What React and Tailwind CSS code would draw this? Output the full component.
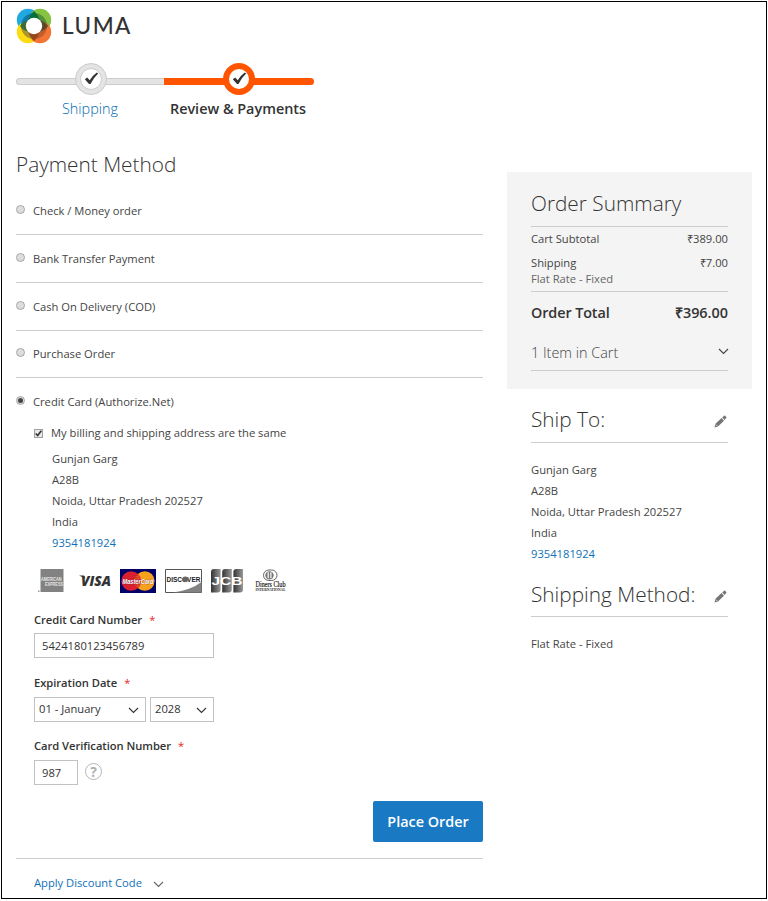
import React from "react";

const address = ["Gunjan Garg", "A28B", "Noida, Uttar Pradesh 202527", "India"];

function LumaMark() {
  return (
    <svg width="36" height="36" viewBox="0 0 36 36" className="block">
      <circle cx="12" cy="12" r="11.200" fill="#21a8e0" />
      <circle cx="24" cy="12" r="11.200" fill="#84c441" />
      <circle cx="12" cy="24" r="11.200" fill="#fcdb12" />
      <circle cx="24" cy="24" r="11.200" fill="#f37435" />
      <path d="M18 18V5A13 13 0 0 0 5 18z" fill="#0f7aa3" />
      <path d="M18 18V5A13 13 0 0 1 31 18z" fill="#548f3b" />
      <path d="M18 18V31A13 13 0 0 1 5 18z" fill="#a8962c" />
      <path d="M18 18V31A13 13 0 0 0 31 18z" fill="#c15c2b" />
      <path d="M18 3Q22 6.500 23.500 11.500L12.500 11.500Q14 6.500 18 3z" fill="#067038" />
      <path d="M18 33Q22 29.500 23.500 24.500L12.500 24.500Q14 29.500 18 33z" fill="#97461c" />
      <path d="M4 18Q6.500 14 11.500 12.500L11.500 23.500Q6.500 22 4 18z" fill="#3f6a33" />
      <path d="M32 18Q29.500 14 24.500 12.500L24.500 23.500Q29.500 22 32 18z" fill="#60472a" />
      <circle cx="18" cy="18" r="8.200" fill="#fff" />
    </svg>
  );
}

function Step({ label, active }) {
  return (
    <div className={`relative flex flex-col items-center ${active ? "w-[150px]" : "w-[148px]"}`}>
      <div
        className={`absolute top-[15px] left-0 h-[7px] w-full ${
          active
            ? "rounded-r-[4px] bg-[#ff5501]"
            : "rounded-l-[4px] border border-r-0 border-[#cccccc] bg-[#e4e4e4]"
        }`}
      />
      <div
        className={`relative flex h-8 w-8 items-center justify-center rounded-full ${
          active ? "bg-[#ff5501]" : "ml-[2px] border border-[#cccccc] bg-[#e4e4e4]"
        }`}
      >
        <div className={`flex items-center justify-center rounded-full bg-white ${active ? "h-5 w-5" : "h-[22px] w-[22px] border border-[#cccccc]"}`}>
          <svg width="15" height="13" viewBox="0 0 15 13" className="mt-[-1px] shrink-0">
            <path d="M.8 7.200L3.200 5.600L5.700 8.300Q8.600 3.600 12.800.600L14.200 1.600Q9.600 5.800 6.500 11.900L5 12z" fill="#333" />
          </svg>
        </div>
      </div>
      <div
        className={`mt-[4px] text-[14.4px] leading-5 whitespace-nowrap ${
          active ? "ml-[-2px] font-semibold text-[#333]" : "font-light text-[#006bb4]"
        }`}
      >
        {label}
      </div>
    </div>
  );
}

function Radio({ checked }) {
  return (
    <span className="mt-[-3px] flex h-[9px] w-[9px] shrink-0 items-center justify-center rounded-full border border-[#a3a3a3] bg-gradient-to-b from-[#e2e2e2] to-[#dadada]">
      {checked && <span className="h-[5px] w-[5px] rounded-full bg-[#444]" />}
    </span>
  );
}

function Method({ label, checked, className, textClass = "pt-[2px]" }) {
  return (
    <div className={`flex items-center gap-2 ${className}`}>
      <Radio checked={checked} />
      <span className={textClass}>{label}</span>
    </div>
  );
}

function Chevron({ className = "" }) {
  return (
    <svg width="11" height="7" viewBox="0 0 11 7" className={`shrink-0 ${className}`}>
      <path d="M1 1l4.500 4.500L10 1" fill="none" stroke="currentColor" strokeWidth="1.100" />
    </svg>
  );
}

function Pencil() {
  return (
    <svg width="13" height="13" viewBox="0 0 13 13" className="mt-[3px] mr-[1px] shrink-0">
      <path d="M.5 12.500L1.500 8.800L7.500 3.100L10 5.700L4 11.400z" fill="#757575" />
      <path d="M8.200 2.500L10.100.700Q10.600.300 11.100.800L12.200 1.900Q12.700 2.400 12.200 2.900L10.600 5z" fill="#757575" />
      <path d="M2 9.700L3.300 11" stroke="#e8e8e8" strokeWidth=".9" />
    </svg>
  );
}

function Cards() {
  return (
    <div className="flex h-6 items-center">
      <svg width="26" height="24" viewBox="0 0 26 24" overflow="visible">
        <path d="M2.500 0h23v23h-23z" fill="#828282" />
        <path d="M0 21.500h1.500v1.500H0z" fill="#999" />
        <g fill="#e6e6e6" fontFamily="Liberation Sans" fontWeight="700" fontSize="4.800">
          <text x="3" y="11.500" textLength="20.500" lengthAdjust="spacingAndGlyphs">AMERICAN</text>
          <text x="7" y="16.500" textLength="18" lengthAdjust="spacingAndGlyphs">EXPRESS</text>
        </g>
      </svg>
      <svg width="34" height="24" viewBox="0 0 34 24" overflow="visible" className="ml-[14px]">
        <text x="3" y="17" textLength="30" lengthAdjust="spacingAndGlyphs" fontFamily="Open Sans" fontStyle="italic" fontWeight="800" fontSize="14.500" fill="#333">VISA</text>
        <path d="M1 6.500h5l1.500 3z" fill="#333" />
      </svg>
      <svg width="36" height="24" viewBox="0 0 36 24" overflow="visible" className="ml-[8px]">
        <path d="M0 0h36v24H0z" fill="#000068" />
        <circle cx="24.800" cy="12" r="9.800" fill="#f7a11c" />
        <circle cx="11.200" cy="12" r="9.800" fill="#d8202f" />
        <path d="M18 5v14M15.500 7.500h5M15 9.500h6M15 15h6M15.500 17h5" stroke="#e25e27" strokeWidth=".8" />
        <text x="2.500" y="14.800" textLength="31" lengthAdjust="spacingAndGlyphs" fontFamily="Liberation Sans" fontStyle="italic" fontWeight="700" fontSize="7.500" fill="#fff" stroke="#5c1434" strokeWidth=".4" paintOrder="stroke">MasterCard</text>
      </svg>
      <svg width="37" height="24" viewBox="0 0 37 24" overflow="visible" className="ml-[9px]">
        <path d="M.5.5h36v23H.5z" fill="#fff" stroke="#555" />
        <path d="M36.500 13v10.500H8Q26 21 36.500 13z" fill="#828282" />
        <text x="1.500" y="13" textLength="34" lengthAdjust="spacingAndGlyphs" fontFamily="Liberation Sans" fontWeight="700" fontSize="7.500" fill="#222">DISCOVER</text>
        <circle cx="20.300" cy="10.300" r="2.900" fill="#666" />
      </svg>
      <svg width="32" height="24" viewBox="0 0 32 24" className="ml-[9px]">
        <defs>
          <linearGradient id="jcb" x1="0" x2="1">
            <stop offset="0" stopColor="#333" />
            <stop offset="1" stopColor="#999" />
          </linearGradient>
        </defs>
        {[0, 11.200, 22.400].map((x) => (
          <path key={x} d={`M${x + 3} 0h6.600v20.500q0 3-3 3H${x}V3q0-3 3-3z`} fill="url(#jcb)" />
        ))}
        <text x=".5" y="15.800" textLength="31" lengthAdjust="spacingAndGlyphs" fill="#fff" fontFamily="Liberation Sans" fontWeight="700" fontSize="11">JCB</text>
      </svg>
      <svg width="32" height="24" viewBox="0 0 32 24" overflow="visible" className="ml-[12px]">
        <rect x="8.500" y="1" width="13.500" height="10.500" rx="5.250" fill="#fff" stroke="#666" />
        <ellipse cx="14.500" cy="6.300" rx="4.200" ry="4.100" fill="#777" />
        <path d="M13.200 3.300v6M15.900 3.300v6" stroke="#fff" strokeWidth="1.200" />
        <text x=".5" y="18" textLength="30" lengthAdjust="spacingAndGlyphs" fontFamily="Liberation Serif" fontSize="7.500" fill="#222" stroke="#222" strokeWidth=".2">Diners Club</text>
        <text x=".5" y="22.300" textLength="30" lengthAdjust="spacingAndGlyphs" fontFamily="Liberation Serif" fontWeight="700" fontSize="4" fill="#222">INTERNATIONAL</text>
      </svg>
    </div>
  );
}

function FieldLabel({ children }) {
  return (
    <div className="flex h-[21px] items-center gap-[7px] font-semibold tracking-[-0.040px] text-[#333]">
      <span>{children}</span>
      <span className="font-normal text-[#e02b27]">*</span>
    </div>
  );
}

function SideHeading({ children, className }) {
  return (
    <div className={`flex items-center justify-between border-b border-[#cccccc] text-[20.8px] font-light text-[#333] ${className}`}>
      <h2>{children}</h2>
      <Pencil />
    </div>
  );
}

function Address() {
  return (
    <div className="flex flex-col leading-[21px]">
      {address.map((line) => (
        <span key={line}>{line}</span>
      ))}
      <span className="text-[#1071b8]">9354181924</span>
    </div>
  );
}

export default function App() {
  return (
    <div className="h-[901px] w-[768px] bg-white p-px font-['Open_Sans',sans-serif] text-[11.2px] text-[#444]">
      <div className="h-[898px] w-[766px] border border-black pl-[14px]">
        <header className="flex h-[61px] items-start gap-[10px] pt-[6px]">
          <LumaMark />
          <span className="pt-[3px] font-[Lato] text-[22.5px] leading-[30px] font-medium tracking-[1.500px] text-[#333]">LUMA</span>
        </header>

        <nav className="flex h-[75px]">
          <Step label="Shipping" />
          <Step label="Review & Payments" active />
        </nav>

        <div className="flex items-start gap-6">
          <main className="w-[467px]">
            <h1 className="flex h-[49px] items-center pt-[4px] text-[20.8px] font-light text-[#333]">Payment Method</h1>
            <Method label="Check / Money order" className="h-12 border-b border-[#cccccc]" />
            <Method label="Bank Transfer Payment" className="h-12 border-b border-[#cccccc]" />
            <Method label="Cash On Delivery (COD)" className="h-12 border-b border-[#cccccc]" />
            <Method label="Purchase Order" textClass="" className="h-[47px] border-b border-[#cccccc]" />
            <Method label="Credit Card (Authorize.Net)" checked className="h-[47px]" />

            <div className="pl-[18px]">
              <div className="flex h-[17px] items-center gap-2">
                <span className="flex h-[9px] w-[9px] items-center justify-center border border-[#a0a0a0] bg-[#e8e8e8]">
                  <svg width="7" height="7" viewBox="0 0 7 7">
                    <path d="M.7 3.500L2.700 5.500L6.300.8" fill="none" stroke="#333" strokeWidth="1.600" />
                  </svg>
                </span>
                <span>My billing and shipping address are the same</span>
              </div>
              <div className="pt-[6px] pl-[18px]">
                <Address />
              </div>
              <div className="pt-[16px] pl-1">
                <Cards />
              </div>
              <div className="pt-[17px]">
                <FieldLabel>Credit Card Number</FieldLabel>
                <div className="mt-[2px] flex h-[25px] w-[180px] items-center border border-[#c2c2c2] pt-px pl-[7px] text-[#333]">5424180123456789</div>
              </div>
              <div className="pt-[15px]">
                <FieldLabel>Expiration Date</FieldLabel>
                <div className="mt-[3px] flex gap-1 text-[#333]">
                  <div className="flex h-[25px] w-[112px] items-center justify-between border border-[#c2c2c2] pr-[6px] pl-1">
                    <span>01 - January</span>
                    <Chevron className="mt-[2px]" />
                  </div>
                  <div className="flex h-[25px] w-[64px] items-center justify-between border border-[#c2c2c2] pr-[6px] pl-1">
                    <span>2028</span>
                    <Chevron className="mt-[2px]" />
                  </div>
                </div>
              </div>
              <div className="pt-[14px]">
                <FieldLabel>Card Verification Number</FieldLabel>
                <div className="mt-[3px] flex gap-[7px]">
                  <div className="flex h-[25px] w-[44px] items-center border border-[#c2c2c2] pt-px pl-[7px] text-[#333]">987</div>
                  <span className="mt-[3px] flex h-[17px] w-[17px] items-center justify-center rounded-full border-[1.500px] border-[#b5b5b5] text-[14px] leading-none font-bold text-[#b0b0b0]">?</span>
                </div>
              </div>
            </div>

            <div className="flex justify-end pt-4">
              <button className="h-[41px] w-[110px] rounded-[2px] bg-[#1979c3] text-[14.4px] font-semibold text-white">Place Order</button>
            </div>
            <div className="mt-4 flex h-[50px] items-center gap-[11px] border-t border-[#cccccc] pl-[18px] text-[#1071b8]">
              <span>Apply Discount Code</span>
              <Chevron className="mt-[2px] text-[#666]" />
            </div>
          </main>

          <aside className="w-[245px] pt-[34px]">
            <section className="h-[217px] bg-[#f4f4f4] px-6 pt-[9px]">
              <h2 className="flex h-[46px] items-center border-b border-[#cccccc] text-[20.8px] font-light text-[#333]">Order Summary</h2>
              <div className="flex h-6 items-center justify-between">
                <span>Cart Subtotal</span>
                <span>₹389.00</span>
              </div>
              <div className="flex h-6 items-center justify-between">
                <span>Shipping</span>
                <span>₹7.00</span>
              </div>
              <div className="h-[17px] border-b border-[#cccccc] leading-2 text-[#666]">Flat Rate - Fixed</div>
              <div className="flex h-[42px] items-center justify-between pb-px text-[14.4px] font-semibold text-[#333]">
                <span className="tracking-[-0.100px]">Order Total</span>
                <span>₹396.00</span>
              </div>
              <div className="flex h-[37px] items-center justify-between border-b border-[#cccccc] text-[14.4px] font-light text-[#444]">
                <span className="pt-[2px]">1 Item in Cart</span>
                <Chevron className="mt-[-2px] mr-[-1px]" />
              </div>
            </section>
            <section className="px-6">
              <SideHeading className="h-[54px] pt-[8px]">Ship To:</SideHeading>
              <div className="pt-[16px]">
                <Address />
              </div>
              <SideHeading className="mt-[10px] h-[43px]">Shipping Method:</SideHeading>
              <div className="pt-[16px] leading-[21px]">Flat Rate - Fixed</div>
            </section>
          </aside>
        </div>
      </div>
    </div>
  );
}
